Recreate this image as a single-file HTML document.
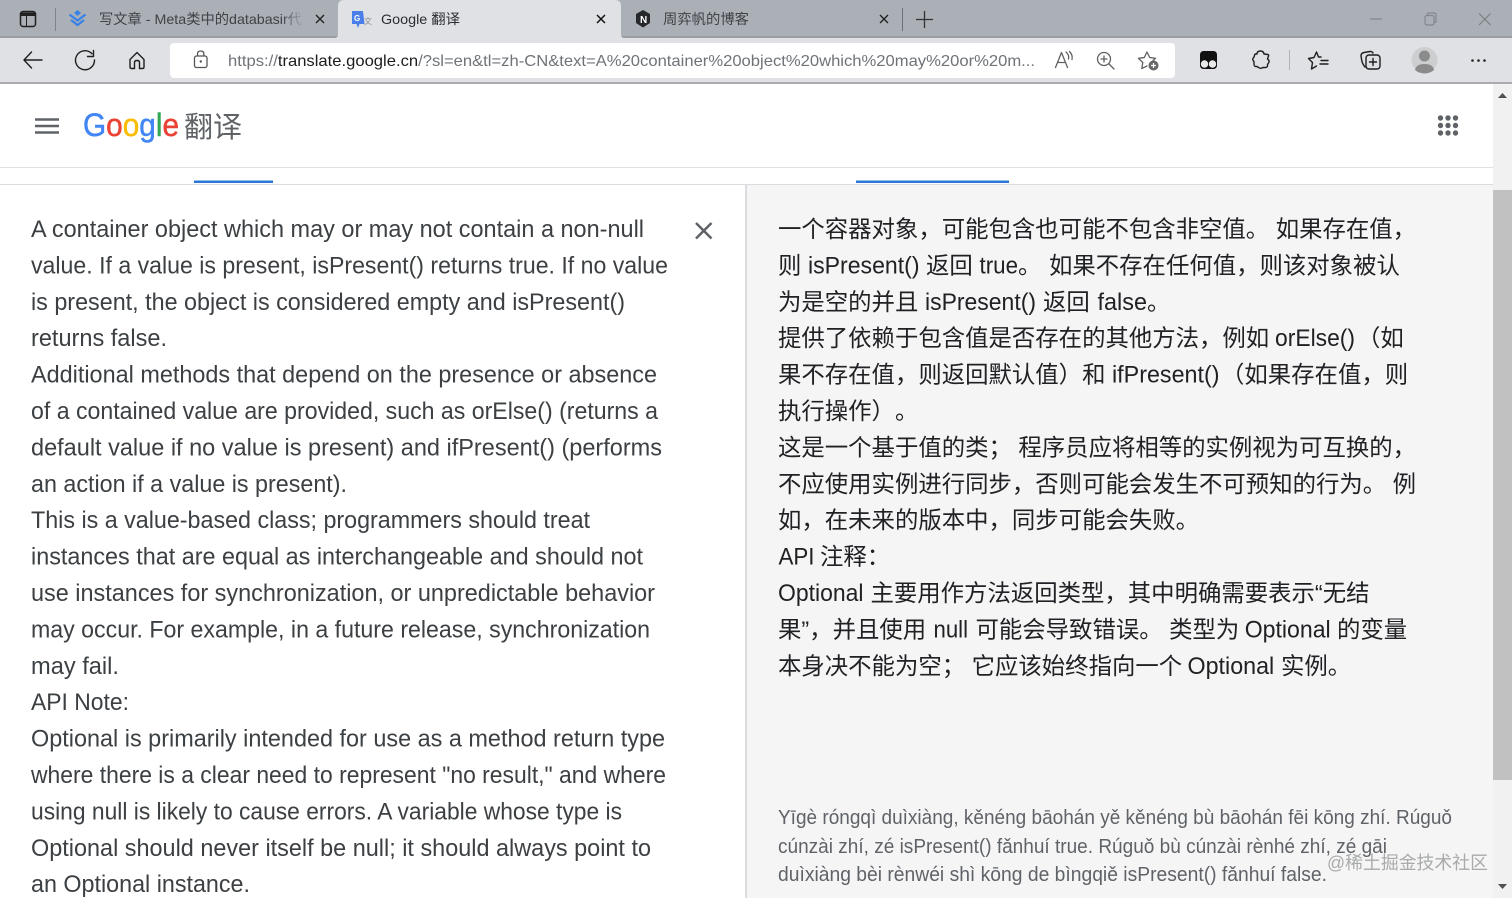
<!DOCTYPE html>
<html lang="zh-CN"><head><meta charset="utf-8"><title>Google 翻译</title>
<style>
html,body{margin:0;padding:0;width:1512px;height:898px;overflow:hidden;background:#fff}
svg{display:block}
text{font-family:"Liberation Sans","Noto Sans CJK SC",sans-serif;white-space:pre}
.l{font-size:24px;fill:#3c4043}
.r{font-size:23.4px;fill:#202124}
.rl{font-size:24px;fill:#202124}
.p{font-size:20px;fill:#5f6368}
.ic{fill:none;stroke:#1f1f1f;stroke-width:1.4;stroke-linecap:round;stroke-linejoin:round}
.ig{fill:none;stroke:#616161;stroke-width:1.3;stroke-linecap:round;stroke-linejoin:round}
</style></head><body>
<svg width="1512" height="898" viewBox="0 0 1512 898" xmlns="http://www.w3.org/2000/svg">
<defs><linearGradient id="fade" x1="0" x2="1" y1="0" y2="0"><stop offset="0" stop-color="#abb0b7" stop-opacity="0"/><stop offset="1" stop-color="#abb0b7"/></linearGradient></defs>
<!-- chrome -->
<rect width="1512" height="38" fill="#abb0b7"/>
<rect y="36" width="1512" height="2" fill="#9a9fa6"/>
<rect y="38" width="1512" height="45" fill="#dfe1e4"/>
<rect y="82" width="1512" height="2" fill="#a9abae"/>
<!-- active tab -->
<path d="M335 38 q3 0 3 -4 V6 q0 -6 6 -6 H615 q6 0 6 6 V34 q0 4 3 4 z" fill="#dfe1e4"/>
<!-- tab strip icons -->
<rect x="20.500" y="11.500" width="15" height="15" rx="2.500" fill="none" stroke="#202020" stroke-width="1.500"/>
<path d="M21 12.500 h14 v3.500 h-14z" fill="#202020"/>
<path d="M26.500 16 v10" stroke="#202020" stroke-width="1"/>
<rect x="55" y="8" width="1" height="23" fill="#80848a"/>
<path d="M77.500 10 l3.500 3 -3.500 3 -3.500-3z" fill="#3b82e6"/>
<path d="M69.500 14.500 l8 6 8-6 M71 20 l6.500 5 6.500-5" fill="none" stroke="#3b82e6" stroke-width="2.300"/>
<text x="99" y="24" font-size="14" fill="#3f4247" textLength="203" lengthAdjust="spacingAndGlyphs">写文章 - Meta类中的databasir代</text>
<rect x="282" y="6" width="22" height="26" fill="url(#fade)"/>
<path d="M316 15 l8 8 M324 15 l-8 8" stroke="#222" stroke-width="1.400"/>
<path d="M352 11 h11 l1.500 13 h-5 l-1.500 4 -1.500-4 h-4.500z" fill="#4a7ee8"/>
<text x="354" y="21" font-size="8" font-weight="700" fill="#fff">G</text>
<text x="364" y="24" font-size="8" fill="#8a8f95">文</text>
<text x="381" y="24" font-size="14" fill="#2b2d30" textLength="79" lengthAdjust="spacingAndGlyphs">Google 翻译</text>
<path d="M597 15 l8 8 M605 15 l-8 8" stroke="#111" stroke-width="1.500"/>
<path d="M643 10 l7 4 v9 l-7 4.500 -7-4.500 v-9z" fill="#26282b"/>
<text x="640" y="23" font-size="10" font-weight="700" fill="#fff">N</text>
<text x="663" y="24" font-size="14" fill="#3f4247" textLength="86" lengthAdjust="spacingAndGlyphs">周弈帆的博客</text>
<path d="M880 15 l8 8 M888 15 l-8 8" stroke="#222" stroke-width="1.400"/>
<rect x="902" y="8" width="1" height="23" fill="#6d7177"/>
<path d="M924.500 11 v17 M916 19.500 h17" stroke="#333" stroke-width="1.300"/>
<!-- window controls -->
<path d="M1370 19 h12" stroke="#83878d" stroke-width="1.300"/>
<rect x="1425" y="15.500" width="9" height="9.500" rx="2" fill="none" stroke="#83878d" stroke-width="1.200"/>
<path d="M1427.500 15 v-.5 q0-1.500 1.500-1.500 h5 q2 0 2 2 v6 q0 1.500-1.500 1.500" fill="none" stroke="#83878d" stroke-width="1.200"/>
<path d="M1479 13.500 l11.500 11.500 M1490.500 13.500 L1479 25" stroke="#7b7f85" stroke-width="1.200"/>
<!-- toolbar icons -->
<path class="ic" d="M42 60 H24 M31.500 52 L24 60 l7.500 8" stroke-width="1.500"/>
<path class="ic" d="M94.500 60 A9.500 9.500 0 1 1 92 53.800 M93.500 50.500 v6 h-6" stroke-width="1.500"/>
<path class="ic" d="M130 59.500 L137 52.500 l7 7 v7.500 q0 1.500-1.500 1.500 h-3 v-6 q0-2-2.500-2 q-2.500 0-2.500 2 v6 h-3 q-1.500 0-1.500-1.500z" stroke-width="1.500"/>
<!-- address bar -->
<rect x="170" y="43" width="1005" height="35" rx="4" fill="#fff"/>
<rect x="194.500" y="56" width="12.500" height="11.500" rx="2" fill="none" stroke="#555" stroke-width="1.300"/>
<path d="M197.500 56 v-2 q0-3 3.200-3 q3.200 0 3.200 3 v2" fill="none" stroke="#555" stroke-width="1.300"/>
<circle cx="200.800" cy="61.500" r="1.200" fill="#555"/>
<text x="228" y="66" font-size="16" fill="#6f7378" textLength="807" lengthAdjust="spacingAndGlyphs">https://<tspan fill="#1c1c1c">translate.google.cn</tspan>/?sl=en&amp;tl=zh-CN&amp;text=A%20container%20object%20which%20may%20or%20m...</text>
<path class="ig" d="M1055.500 67.500 L1061.500 52.500 L1067.500 67.500 M1057.800 62.500 h7.400 M1066 52 q3.500 3 2.500 7 M1069.500 51.500 q3.500 3.500 2.500 8"/>
<circle class="ig" cx="1104" cy="59" r="6.500"/>
<path class="ig" d="M1109 64 l5 5 M1104 56 v6 M1101 59 h6"/>
<path class="ig" d="M1153 60.500 L1155.500 58.300 L1149.700 57.500 L1147 52 L1144.300 57.500 L1138.500 58.300 L1142.800 62.500 L1141.800 68.500 L1147 66" stroke="#444"/>
<circle cx="1153.500" cy="65.500" r="5" fill="#666"/>
<path d="M1153.500 63 v5 M1151 65.500 h5" stroke="#fff" stroke-width="1.200"/>
<!-- extensions -->
<rect x="1200" y="51" width="17" height="18" rx="3.500" fill="#111"/>
<circle cx="1204.500" cy="64" r="3.700" fill="#e9e9ea"/><circle cx="1212.500" cy="64" r="3.700" fill="#e9e9ea"/>
<path class="ic" d="M1257 54 q0-3 3.500-3 q3 0 3.500 3 l4 .5 q1 .5 .5 1.500 l-1 3 q2.500 1.500 1 4 l-1 1.500 q.5 3-2 3 l-2.500 0 q-2.500 1.500-4.500 0 l-1.500-1 q-3 .5-3-2.500 v-2.500 q-2.500-2 0-4.500 l.5-1.500 q0-1.500 1.500-1.500z"/>
<rect x="1289" y="50" width="1" height="20" fill="#b0b3b7"/>
<path class="ic" d="M1321 57 h-2.500 L1316.500 52 L1314 57.500 L1308.500 58.500 L1312.500 62.500 L1311.500 69 L1316.500 66 M1321 60.500 h7 M1320 64 h8"/>
<path class="ic" d="M1365 67 q-3-3.500-3.500-8 l-.5-3 q0-3 3-3.500 l6-1 q2-.2 3 1.500"/>
<rect class="ic" x="1366" y="55" width="14" height="14" rx="3"/>
<path class="ic" d="M1373 58.500 v7 M1369.500 62 h7"/>
<circle cx="1424.500" cy="60" r="13" fill="#cdcecf"/>
<circle cx="1424.500" cy="56" r="5.500" fill="#8b8b8b"/>
<path d="M1415 70 q1-6 9.500-6 q8.500 0 9.500 6 q-4 3.500-9.500 3.500 q-5.500 0-9.500-3.500z" fill="#8b8b8b"/>
<circle cx="1472.500" cy="60.500" r="1.300" fill="#222"/><circle cx="1478.500" cy="60.500" r="1.300" fill="#222"/><circle cx="1484.500" cy="60.500" r="1.300" fill="#222"/>
<!-- page header -->
<rect y="84" width="1493" height="814" fill="#fff"/>
<path d="M35 119.500 h24 M35 126 h24 M35 132.500 h24" stroke="#5f6368" stroke-width="2.400"/>
<text x="83" y="136" font-size="32" stroke-width=".5" textLength="96" lengthAdjust="spacingAndGlyphs" style="font-family:'Liberation Sans',sans-serif"><tspan fill="#4285f4" stroke="#4285f4">G</tspan><tspan fill="#ea4335" stroke="#ea4335">o</tspan><tspan fill="#fbbc05" stroke="#fbbc05">o</tspan><tspan fill="#4285f4" stroke="#4285f4">g</tspan><tspan fill="#34a853" stroke="#34a853">l</tspan><tspan fill="#ea4335" stroke="#ea4335">e</tspan></text>
<text x="184" y="137" font-size="29" fill="#5f6368">翻译</text>
<g fill="#5f6368">
<circle cx="1440.500" cy="118" r="2.700"/><circle cx="1448" cy="118" r="2.700"/><circle cx="1455.500" cy="118" r="2.700"/>
<circle cx="1440.500" cy="125.500" r="2.700"/><circle cx="1448" cy="125.500" r="2.700"/><circle cx="1455.500" cy="125.500" r="2.700"/>
<circle cx="1440.500" cy="133" r="2.700"/><circle cx="1448" cy="133" r="2.700"/><circle cx="1455.500" cy="133" r="2.700"/>
</g>
<rect y="167" width="1493" height="1" fill="#e0e1e3"/>
<rect y="184" width="1493" height="1" fill="#dadce0"/>
<rect x="194" y="180.500" width="79" height="2.500" fill="#2a78d6"/>
<rect x="856" y="180.500" width="153" height="2.500" fill="#2a78d6"/>
<!-- panels -->
<rect x="746" y="185" width="747" height="713" fill="#f5f5f5"/>
<rect x="745" y="185" width="2" height="713" fill="#dadce0"/>
<path d="M696 223 l15.500 15.500 M711.500 223 L696 238.500" stroke="#5f6368" stroke-width="2.500"/>
<!-- left text -->
<text class="l" x="31" y="237" textLength="613" lengthAdjust="spacingAndGlyphs">A container object which may or may not contain a non-null</text>
<text class="l" x="31" y="273.400" textLength="637" lengthAdjust="spacingAndGlyphs">value. If a value is present, isPresent() returns true. If no value</text>
<text class="l" x="31" y="309.800" textLength="594" lengthAdjust="spacingAndGlyphs">is present, the object is considered empty and isPresent()</text>
<text class="l" x="31" y="346.200" textLength="136" lengthAdjust="spacingAndGlyphs">returns false.</text>
<text class="l" x="31" y="382.600" textLength="626" lengthAdjust="spacingAndGlyphs">Additional methods that depend on the presence or absence</text>
<text class="l" x="31" y="419" textLength="627" lengthAdjust="spacingAndGlyphs">of a contained value are provided, such as orElse() (returns a</text>
<text class="l" x="31" y="455.400" textLength="631" lengthAdjust="spacingAndGlyphs">default value if no value is present) and ifPresent() (performs</text>
<text class="l" x="31" y="491.800" textLength="316" lengthAdjust="spacingAndGlyphs">an action if a value is present).</text>
<text class="l" x="31" y="528.200" textLength="559" lengthAdjust="spacingAndGlyphs">This is a value-based class; programmers should treat</text>
<text class="l" x="31" y="564.600" textLength="612" lengthAdjust="spacingAndGlyphs">instances that are equal as interchangeable and should not</text>
<text class="l" x="31" y="601" textLength="624" lengthAdjust="spacingAndGlyphs">use instances for synchronization, or unpredictable behavior</text>
<text class="l" x="31" y="637.400" textLength="619" lengthAdjust="spacingAndGlyphs">may occur. For example, in a future release, synchronization</text>
<text class="l" x="31" y="673.800" textLength="88" lengthAdjust="spacingAndGlyphs">may fail.</text>
<text class="l" x="31" y="710.200" textLength="98" lengthAdjust="spacingAndGlyphs">API Note:</text>
<text class="l" x="31" y="746.600" textLength="634" lengthAdjust="spacingAndGlyphs">Optional is primarily intended for use as a method return type</text>
<text class="l" x="31" y="783" textLength="635" lengthAdjust="spacingAndGlyphs">where there is a clear need to represent "no result," and where</text>
<text class="l" x="31" y="819.400" textLength="591" lengthAdjust="spacingAndGlyphs">using null is likely to cause errors. A variable whose type is</text>
<text class="l" x="31" y="855.800" textLength="620" lengthAdjust="spacingAndGlyphs">Optional should never itself be null; it should always point to</text>
<text class="l" x="31" y="892.200" textLength="219" lengthAdjust="spacingAndGlyphs">an Optional instance.</text>
<!-- right text -->
<text class="r" x="778" y="237">一个容器对象&#xFF0C;可能包含也可能不包含非空值。 如果存在值&#xFF0C;</text>

<text class="r" x="778" y="273.400">则</text>
<text class="rl" x="808" y="273.400" textLength="111.500" lengthAdjust="spacingAndGlyphs">isPresent()</text>
<text class="r" x="926" y="273.400">返回</text>
<text class="rl" x="979.500" y="273.400" textLength="38.500" lengthAdjust="spacingAndGlyphs">true</text>
<text class="r" x="1018" y="273.400">。</text>
<text class="r" x="1049" y="273.400">如果不存在任何值&#xFF0C;则该对象被认</text>

<text class="r" x="778" y="309.800">为是空的并且</text>
<text class="rl" x="925" y="309.800" textLength="111" lengthAdjust="spacingAndGlyphs">isPresent()</text>
<text class="r" x="1043" y="309.800">返回</text>
<text class="rl" x="1097.500" y="309.800" textLength="49.500" lengthAdjust="spacingAndGlyphs">false</text>
<text class="r" x="1147" y="309.800">。</text>

<text class="r" x="778" y="346.200">提供了依赖于包含值是否存在的其他方法&#xFF0C;例如</text>
<text class="rl" x="1275" y="346.200" textLength="80" lengthAdjust="spacingAndGlyphs">orElse()</text>
<text class="r" x="1357" y="346.200">&#xFF08;如</text>

<text class="r" x="778" y="382.600">果不存在值&#xFF0C;则返回默认值&#xFF09;和</text>
<text class="rl" x="1112" y="382.600" textLength="107.500" lengthAdjust="spacingAndGlyphs">ifPresent()</text>
<text class="r" x="1221" y="382.600">&#xFF08;如果存在值&#xFF0C;则</text>

<text class="r" x="778" y="419">执行操作&#xFF09;</text>
<text class="r" x="895" y="419">。</text>
<text class="r" x="778" y="455.400">这是一个基于值的类&#xFF1B; 程序员应将相等的实例视为可互换的&#xFF0C;</text>
<text class="r" x="778" y="491.800">不应使用实例进行同步&#xFF0C;否则可能会发生不可预知的行为。 例</text>
<text class="r" x="778" y="528.200">如&#xFF0C;在未来的版本中&#xFF0C;同步可能会失败。</text>

<text class="rl" x="778.500" y="564.600" textLength="36" lengthAdjust="spacingAndGlyphs">API</text>
<text class="r" x="820" y="564.600">注释&#xFF1A;</text>

<text class="rl" x="778" y="601" textLength="85.500" lengthAdjust="spacingAndGlyphs">Optional</text>
<text class="r" x="870.500" y="601">主要用作方法返回类型&#xFF0C;其中明确需要表示“无结</text>

<text class="r" x="778" y="637.400">果”&#xFF0C;并且使用</text>
<text class="rl" x="933.500" y="637.400" textLength="34.500" lengthAdjust="spacingAndGlyphs">null</text>
<text class="r" x="975.500" y="637.400">可能会导致错误。 类型为</text>
<text class="rl" x="1244.700" y="637.400" textLength="86" lengthAdjust="spacingAndGlyphs">Optional</text>
<text class="r" x="1337" y="637.400">的变量</text>

<text class="r" x="778" y="673.800">本身决不能为空&#xFF1B; 它应该始终指向一个</text>
<text class="rl" x="1187.500" y="673.800" textLength="86.700" lengthAdjust="spacingAndGlyphs">Optional</text>
<text class="r" x="1281" y="673.800">实例。</text>
<!-- pinyin -->
<text class="p" x="778" y="824" textLength="674" lengthAdjust="spacingAndGlyphs">Yīgè róngqì duìxiàng, kěnéng bāohán yě kěnéng bù bāohán fēi kōng zhí. Rúguǒ</text>
<text class="p" x="778" y="853" textLength="609" lengthAdjust="spacingAndGlyphs">cúnzài zhí, zé isPresent() fǎnhuí true. Rúguǒ bù cúnzài rènhé zhí, zé gāi</text>
<text class="p" x="778" y="881" textLength="549" lengthAdjust="spacingAndGlyphs">duìxiàng bèi rènwéi shì kōng de bìngqiě isPresent() fǎnhuí false.</text>
<!-- watermark -->
<text x="1327" y="869" font-size="18" fill="#a9aaab" textLength="161" lengthAdjust="spacingAndGlyphs">@稀土掘金技术社区</text>
<!-- scrollbar -->
<rect x="1493" y="84" width="19" height="814" fill="#f1f1f1"/>
<rect x="1493" y="190" width="19" height="590" fill="#c1c1c1"/>
<path d="M1498 98 l4.500-5 4.500 5z" fill="#505050"/>
<path d="M1498 884 l4.500 5 4.500-5z" fill="#505050"/>
</svg>
</body></html>
